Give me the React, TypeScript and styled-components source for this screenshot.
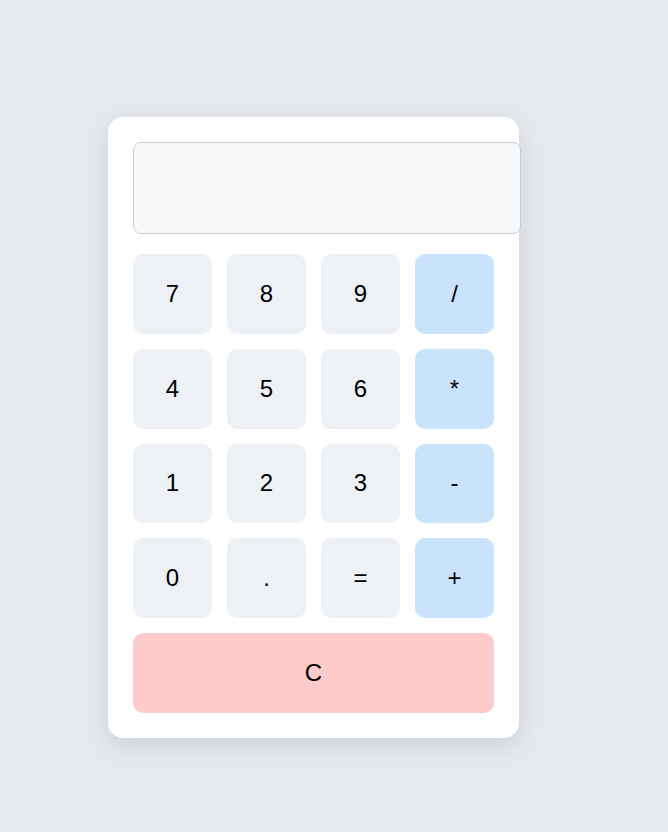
import React from "react";
import styled, { createGlobalStyle } from "styled-components";

const GlobalStyle = createGlobalStyle`
  html, body {
    margin: 0;
    padding: 0;
    background: #e5e9ee;
    font-family: "Liberation Sans", Arial, sans-serif;
  }
`;

const Page = styled.div`
  min-height: 832px;
  box-sizing: border-box;
  padding: 117px 0 0 108px;
`;

const Card = styled.div`
  width: 361px;
  padding: 25px;
  background: #ffffff;
  border-radius: 15px;
  box-shadow: 0 8px 24px rgba(0, 0, 0, 0.1);
`;

const Display = styled.div`
  width: 100%;
  height: 90px;
  padding: 0 12.5px;
  box-sizing: content-box;
  margin-bottom: 20px;
  background: #f7f8fa;
  border: 1px solid #cccccc;
  border-radius: 8px;
  font-size: 32px;
  text-align: right;
`;

const Grid = styled.div`
  display: grid;
  grid-template-columns: repeat(4, 1fr);
  row-gap: 15px;
  column-gap: 15px;
`;

type Kind = "num" | "op" | "clear";

const bg: Record<Kind, string> = {
  num: "#edf1f6",
  op: "#c9e3fc",
  clear: "#fecbcb",
};

const Key = styled.button<{ $kind: Kind; $wide?: boolean }>`
  height: 79.75px;
  border: none;
  border-radius: 10px;
  background: ${(p) => bg[p.$kind]};
  color: #000;
  font-family: "Liberation Sans", Arial, sans-serif;
  font-size: 24px;
  padding: 0;
  cursor: pointer;
  grid-column: ${(p) => (p.$wide ? "1 / -1" : "auto")};
`;

const keys: { label: string; kind: Kind }[] = [
  { label: "7", kind: "num" },
  { label: "8", kind: "num" },
  { label: "9", kind: "num" },
  { label: "/", kind: "op" },
  { label: "4", kind: "num" },
  { label: "5", kind: "num" },
  { label: "6", kind: "num" },
  { label: "*", kind: "op" },
  { label: "1", kind: "num" },
  { label: "2", kind: "num" },
  { label: "3", kind: "num" },
  { label: "-", kind: "op" },
  { label: "0", kind: "num" },
  { label: ".", kind: "num" },
  { label: "=", kind: "num" },
  { label: "+", kind: "op" },
];

export default function App() {
  return (
    <Page>
      <GlobalStyle />
      <Card>
        <Display />
        <Grid>
          {keys.map((k) => (
            <Key key={k.label} $kind={k.kind}>
              {k.label}
            </Key>
          ))}
          <Key $kind="clear" $wide>
            C
          </Key>
        </Grid>
      </Card>
    </Page>
  );
}
